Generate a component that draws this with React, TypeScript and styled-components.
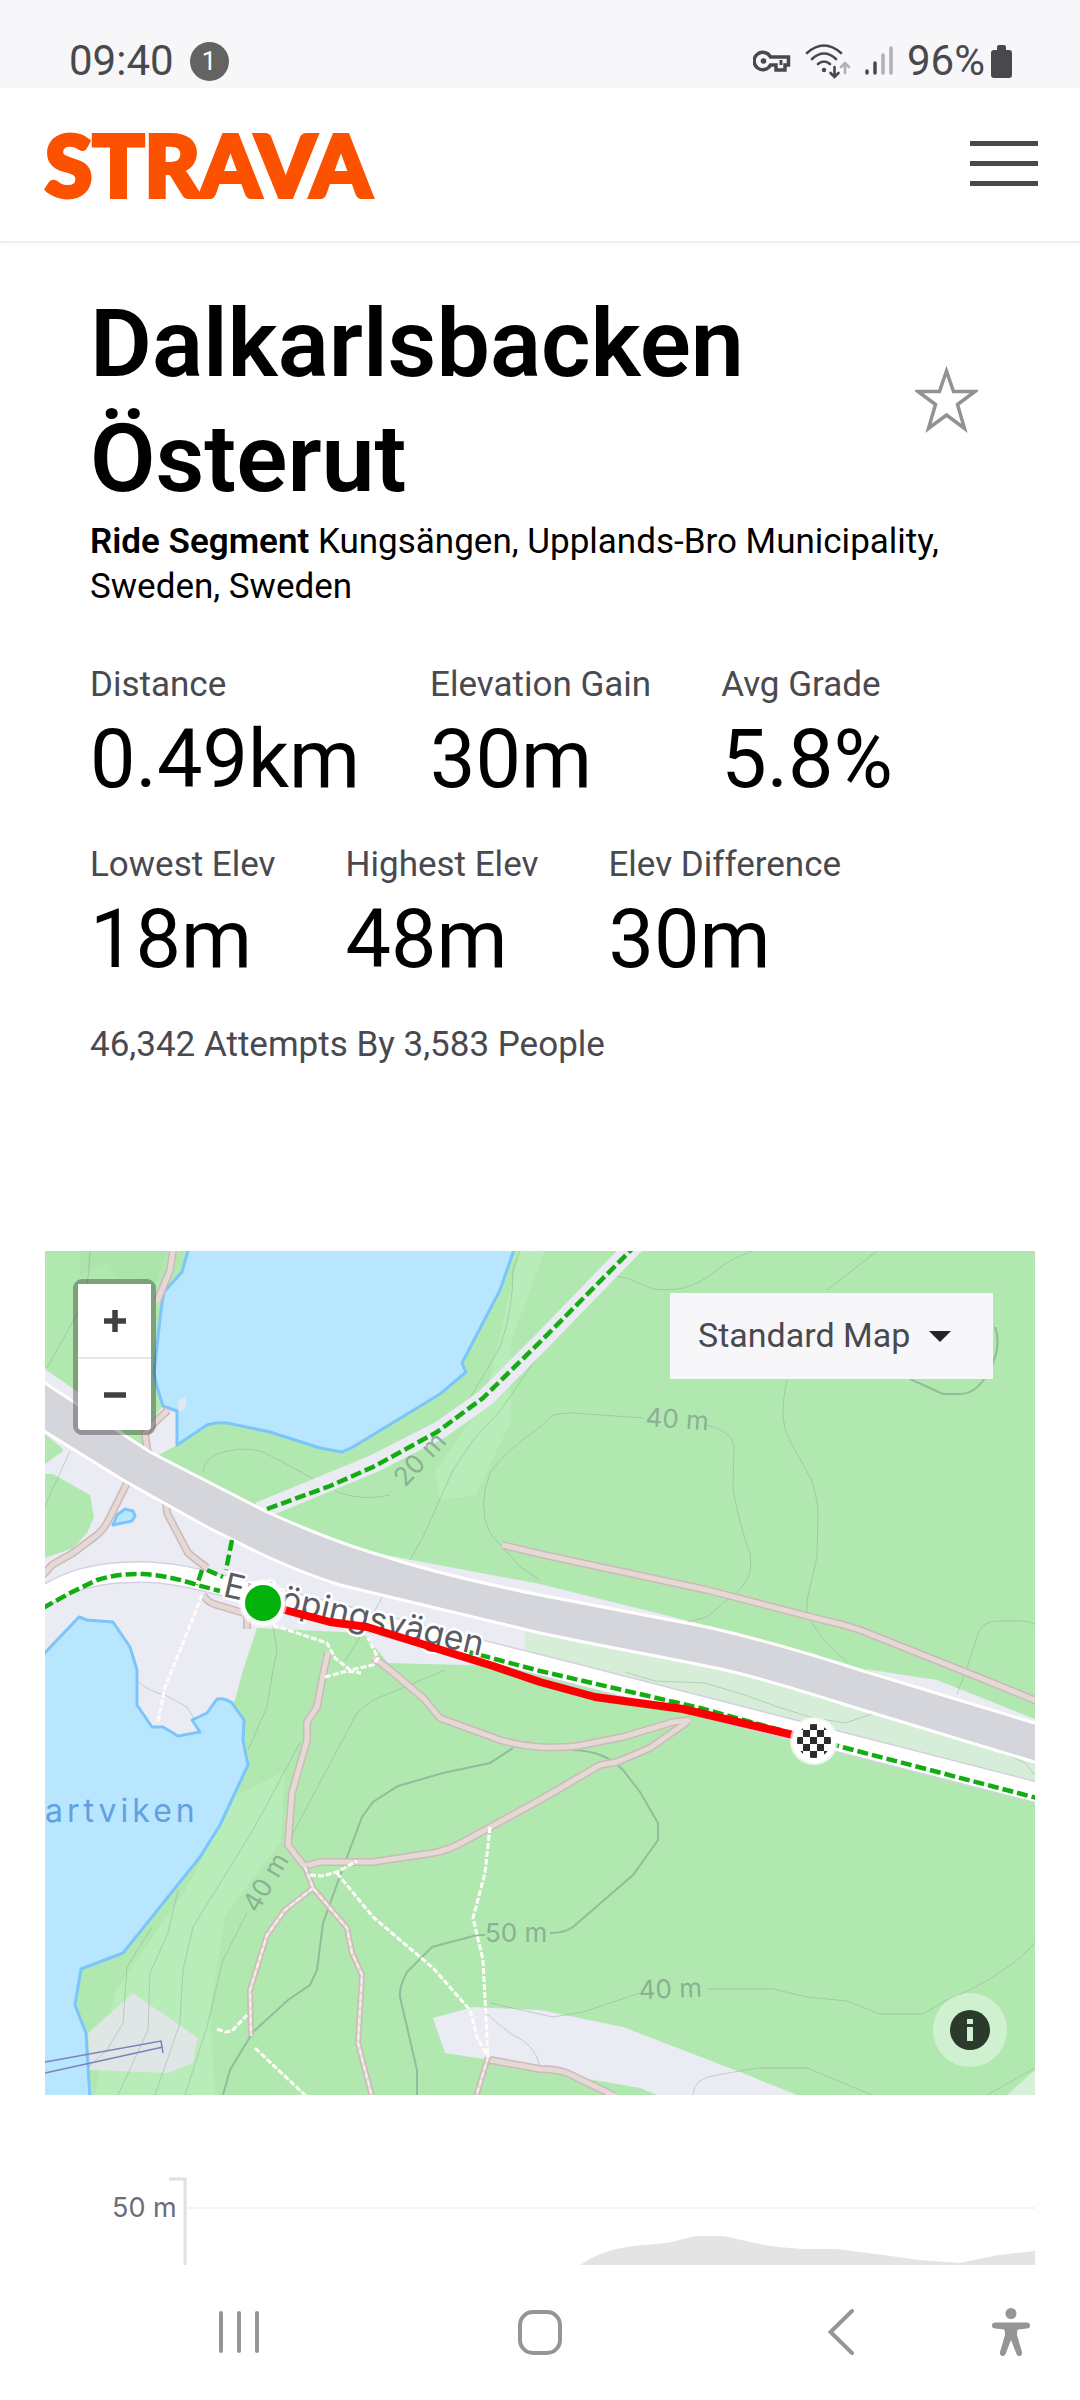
import * as React from "react";
import styled, { createGlobalStyle } from "styled-components";

const GlobalStyle = createGlobalStyle`
  * {
    box-sizing: border-box;
  }

  body {
    margin: 0;
    background: #fff;
    color: #000;
    font-family: Roboto, "Liberation Sans", sans-serif;
  }

  button {
    border: 0;
    padding: 0;
    background: none;
    color: inherit;
    font: inherit;
    cursor: pointer;
  }
`;

const Page = styled.div`
  display: flex;
  flex-direction: column;
  min-height: 100vh;
`;

const StatusBar = styled.div`
  display: flex;
  justify-content: space-between;
  height: 88px;
  padding: 33px 68px 0 69px;
  background: #f7f7fa;
  color: #49494b;
  font-size: 42px;
  line-height: 56px;
`;

const StatusGroup = styled.div<{ $gap: number }>`
  display: flex;
  align-items: center;
  gap: ${({ $gap }) => $gap}px;
  height: 56px;
`;

const Count = styled.span`
  width: 39px;
  height: 39px;
  border-radius: 50%;
  background: #636363;
  color: #fff;
  font-size: 26px;
  line-height: 39px;
  text-align: center;
`;

const Header = styled.header`
  display: flex;
  align-items: center;
  justify-content: space-between;
  height: 155px;
  padding: 0 42px 2px 45px;
  border-bottom: 2px solid #f0f0f1;
  box-shadow: 0 2px 4px rgba(0, 0, 0, 0.02);
`;

const Logo = styled.a`
  color: #fc5200;
  font-family: Lato, "Open Sans", sans-serif;
  font-size: 86px;
  font-weight: 900;
  line-height: 104px;
  text-decoration: none;
  -webkit-text-stroke: 4px #fc5200;
`;

const MenuButton = styled.button`
  display: flex;
  flex-direction: column;
  gap: 15px;
  width: 68px;

  span {
    height: 5px;
    background: #49484d;
  }
`;

const Summary = styled.section`
  padding: 43px 90px 184px;
`;

const TitleRow = styled.div`
  display: flex;
  align-items: center;
  justify-content: space-between;
  padding-right: 12px;
`;

const Title = styled.h1`
  max-width: 700px;
  margin: 0;
  font-size: 95px;
  font-weight: 600;
  line-height: 115px;
`;

const StarButton = styled.button`
  display: flex;
`;

const Location = styled.p`
  margin: 3px 0 53px;
  font-size: 35px;
  line-height: 45px;

  b {
    font-weight: 600;
  }
`;

const Stats = styled.dl`
  display: flex;
  gap: 70px;
  margin: 0 0 29px;
`;

const StatLabel = styled.dt`
  color: #494950;
  font-size: 35px;
  line-height: 45px;
`;

const StatValue = styled.dd`
  margin: 0;
  font-size: 81px;
  line-height: 106px;
`;

const Attempts = styled.p`
  margin: 0;
  color: #494950;
  font-size: 35px;
  line-height: 45px;
`;

const MapFrame = styled.section`
  position: relative;
  margin: 0 45px;

  > svg {
    display: block;
    width: 100%;
    height: auto;
  }
`;

const ZoomControl = styled.div`
  position: absolute;
  top: 28px;
  left: 28px;
  width: 83px;
  border: 5px solid rgba(0, 0, 0, 0.3);
  border-radius: 9px;
  background-clip: padding-box;
`;

const ZoomButton = styled.button`
  display: flex;
  align-items: center;
  justify-content: center;
  width: 100%;
  height: 73px;
  background: #fff;

  & + & {
    border-top: 2px solid #e6e6e6;
    border-radius: 0 0 4px 4px;
  }
`;

const MapPicker = styled.label`
  position: absolute;
  top: 42px;
  right: 42px;
  display: flex;
  align-items: center;

  select {
    width: 323px;
    height: 86px;
    padding: 0 80px 2px 28px;
    border: 0;
    border-radius: 0;
    background: #f7f7fa;
    color: #494950;
    font: 34px Roboto, sans-serif;
    appearance: none;
  }

  svg {
    position: absolute;
    right: 42px;
    pointer-events: none;
  }
`;

const InfoButton = styled.button`
  position: absolute;
  right: 28px;
  bottom: 28px;
  display: flex;
  align-items: center;
  justify-content: center;
  width: 74px;
  height: 74px;
  border-radius: 50%;
  background: rgba(255, 255, 255, 0.4);
`;

const Elevation = styled.section`
  margin: 0 45px;

  svg {
    display: block;
    width: 100%;
    height: auto;
  }
`;

const SystemNav = styled.nav`
  display: grid;
  grid-template-columns: 1fr 1fr 1fr 38px;
  flex: 1;
  min-height: 135px;
  padding: 0 50px 2px 88px;
  color: #959595;

  button {
    display: flex;
    align-items: center;
    justify-content: center;
  }
`;

const Road = styled.g<{ $width: number; $casing: string; $fill: string }>`
  fill: none;
  stroke-linejoin: round;

  .casing {
    stroke: ${({ $casing }) => $casing};
    stroke-width: ${({ $width }) => $width + 3}px;
  }

  .fill {
    stroke: ${({ $fill }) => $fill};
    stroke-width: ${({ $width }) => $width}px;
  }
`;

const Footpath = styled.path`
  fill: none;
  stroke: #fffdfa;
  stroke-width: 3px;
  stroke-dasharray: 6 2;
`;

const CyclePath = styled.path`
  fill: none;
  stroke: #13ad12;
  stroke-width: 4.5px;
  stroke-dasharray: 11 4;
`;

const Water = styled.path`
  fill: #b8e6ff;
  stroke: #7cc5fb;
  stroke-width: 3px;
  stroke-linejoin: round;
`;

const Contour = styled.path<{ $strong?: boolean }>`
  fill: none;
  stroke: #7f9f8c;
  stroke-opacity: ${({ $strong }) => ($strong ? 0.6 : 0.4)};
  stroke-width: ${({ $strong }) => ($strong ? 2 : 1)}px;
`;

const ContourLabel = styled.text`
  fill: #8cb094;
  font: 26px Inter, sans-serif;
`;

const stats = [
  [
    { label: "Distance", value: "0.49km" },
    { label: "Elevation Gain", value: "30m" },
    { label: "Avg Grade", value: "5.8%" },
  ],
  [
    { label: "Lowest Elev", value: "18m" },
    { label: "Highest Elev", value: "48m" },
    { label: "Elev Difference", value: "30m" },
  ],
];

const tracks = [
  "M128 0L125 19L112 51",
  "M123 159L107 174L100 182L103 205",
  "M84 228L62 272Q56 282 48 287L28 302L7 314L-2 324",
  "M121 248L122 262L143 302L162 317",
  "M158 344Q163 352 172 354L202 363V378",
  "M457 294L495 303L662 339L778 369Q797 373 815 379L918 420L992 450",
  "M283 401L279 419L272 456L262 471V489L247 542L243 594L260 616",
  "M328 406L345 419L378 447L395 467L455 489Q475 495 495 496Q515 497 532 495L578 486L628 471L645 469",
  "M260 615L275 611H328L388 602Q404 599 418 591L495 549L555 514L572 511L605 497L642 471",
  "M445 809L495 818Q510 818 522 822L570 845",
];

const narrowTracks = [
  "M260 616L268 637L302 677L307 702L317 724L313 792L327 846",
  "M268 637L240 659L222 684L205 739L206 785",
  "M443 806L431 846",
];

const footpaths = [
  "M157 344L142 382L127 419L120 436L113 471",
  "M228 374L282 392L290 407L305 419L328 414L333 407L323 387",
  "M280 426L302 420L316 422",
  "M265 624L277 625L292 621L312 610",
  "M292 622L328 666L388 717L425 759L432 786L443 806",
  "M445 576L440 622L428 667L438 709L443 806",
  "M172 778L180 781L187 780L202 764",
  "M210 797L262 846",
];

const contours = [
  "M45 0Q43 40 38 52L2 117",
  "M25 200L0 255",
  "M158 222Q158 205 182 200Q210 194 228 206L295 242Q320 250 345 244M418 159L455 96Q468 60 468 19L475 0",
  "M365 309L378 286L408 219L428 189L455 160L495 102L528 46Q545 24 562 24L582 27L608 38Q626 40 638 37Q656 32 668 22Q684 8 707 0",
  "M495 329L475 316L445 282Q432 256 445 222Q458 202 495 176L508 164Q515 162 528 162L598 167M662 174Q686 180 689 194L688 239Q694 272 705 302Q707 320 703 326Q697 339 682 349L662 366L642 371",
  "M832 0L782 39M742 128Q738 145 738 162Q739 178 743 186L765 226Q771 240 773 259L772 306L762 349V360Q770 385 802 411",
  "M990 373Q984 370 975 370H952Q936 370 932 386L923 414L912 443",
  "M400 419L328 449L312 462L255 569L240 597M202 662L178 709L162 776L140 844",
  "M990 692Q960 725 902 749L878 763H835L802 750L762 746L728 738H662M595 742L538 761L508 766L445 752",
  "M648 844Q648 827 672 824L712 817H762L827 844",
  "M228 419L222 456L203 499M255 492L208 579L148 676L138 719L135 772L110 844",
  "M133 639L123 682L105 722L103 779L73 844",
  "M107 676L82 716L78 772L62 799L43 816",
  "M92 430Q105 441 120 444L142 456L150 469M438 760L466 783Q490 793 495 815",
  "M228 374L232 400L228 419M338 345L315 386L300 410",
  "M580 421L610 430L660 432L700 444L730 455L765 466L800 472L830 462M960 502L980 512L990 524",
  "M942 844L990 817",
];

const strongContours = [
  "M950 76Q956 92 948 112Q934 145 912 143H898L865 128",
  "M468 497L445 512L398 522L353 535L328 551L317 566L302 606L278 672L272 719L265 734L243 749L208 781L185 819L178 844",
  "M528 499Q560 500 578 519L595 541L613 572V589L588 624L528 676Q520 682 505 682M440 684H432L387 696L362 721Q354 736 355 746L372 819V846",
];

function Tracks({ paths, width }: { paths: string[]; width: number }) {
  return (
    <Road $width={width} $casing="#cdb9b8" $fill="#e4d9d5">
      {paths.map((d) => <path key={d} className="casing" d={d} />)}
      {paths.map((d) => <path key={d} className="fill" d={d} />)}
    </Road>
  );
}

function TerrainMap() {
  const road = "M-4 348C20 330 50 321 95 321C130 321 160 330 200 340L495 414L994 542";
  const motorway =
    "M-6 128L105 201L222 261C260 278 300 294 335 304C390 322 440 333 495 344L662 376C710 387 760 401 815 419L996 474V513L808 456C760 441 720 428 680 419C620 406 560 396 495 382L295 334C260 323 235 312 212 301L162 276L78 229L-6 177Z";

  return (
    <svg viewBox="0 0 990 844" role="img" aria-label="Segment map">
      <rect width="990" height="844" fill="#b1e8b0" />

      {/* open woodland and clearings */}
      <g fill="#b8ecb8">
        <path d="M190 545L240 520L236 590L180 665L165 760L170 844H50L70 740L140 640Z" />
        <path d="M474 0H500L466 90L466 170L430 245L395 248L390 220L440 150Z" />
      </g>
      <path d="M35 0H122L112 30L70 26L62 12L35 24Z" fill="#ace4ab" />

      <g fill="#ebebf4">
        <path d="M0 213L18 200L0 183V118L60 160L162 276L495 382V416L343 412L318 382L212 377L198 419L190 449L150 500H80L0 420Z" />
        <path d="M118 155L132 160V194L110 206L98 180Z" />
        <path d="M335 303L495 333L660 374L495 350Z" />
        <path d="M820 418L892 429L990 468V476Z" />
        <path d="M388 767L428 756L495 759L578 776L695 821L752 844H612L595 837L538 827L445 809L400 802Z" />
      </g>
      <path d="M0 223H8L45 244L49 266L42 282L28 297L0 307Z" fill="#b1e8b0" />
      <path d="M0 183L18 198L0 213Z" fill="#b1e8b0" />
      <path d="M990 819L962 844H990Z" fill="#d6f0d9" />
      <path d="M480 380L495 382L692 419L990 511V530L800 482L495 404L480 400Z" fill="#d6eed8" />

      <Water d="M144 -4L137 21L119 41L116 59L109 122L112 136L118 155L132 160V194L162 174Q172 171 182 172L225 181L275 197L297 201L308 196L395 143L421 121L417 112L455 39L470 -4Z" />
      <ellipse cx="137" cy="153" rx="4" ry="7" fill="#e3e6f3" transform="rotate(15 137 153)" />
      <Water d="M-4 406L34 366L42 369L68 371L85 396L92 419V454L107 476H118L133 485L155 481L147 469L162 462L172 448Q180 447 187 452L199 469L198 489L203 514L175 574L155 606L78 702L36 718L30 754L41 782L45 848H-4Z" />
      <Water d="M68 274L72 264L80 258L88 260L90 265L87 270Z" />
      <path d="M43 782L88 742L153 787L148 812L123 822L45 819Z" fill="#e0e5e6" />
      <path d="M0 811L116 790L118 802M0 822L118 796" fill="none" stroke="#7b80bb" strokeWidth="1.5" />

      {contours.map((d) => <Contour key={d} d={d} />)}
      {strongContours.map((d) => <Contour key={d} d={d} $strong />)}

      <path d="M214 260L328 213L395 179L440 147L495 92L590 -6" fill="none" stroke="#ebebf4" strokeWidth="18" />
      <Tracks paths={tracks} width={5} />
      <Tracks paths={narrowTracks} width={3} />
      <path d={narrowTracks.join("")} fill="none" stroke="#f5efec" strokeWidth="2" strokeDasharray="5 3" />
      {footpaths.map((d) => <Footpath key={d} d={d} />)}

      <path d={motorway} fill="#d5d6dc" stroke="#fff" strokeWidth="3" />
      <Road $width={19} $casing="#d3d2de" $fill="#fff">
        <path className="casing" d={road} />
        <path className="fill" d={road} />
      </Road>

      <CyclePath d="M222 258L285 235L328 216L392 181L438 147L495 91L588 -3" />
      <CyclePath d="M-2 357L25 342L52 329Q75 322 98 323Q126 325 152 334L175 340" />
      <CyclePath d="M187 289L181 319M157 319L152 334M162 319L178 326" />
      <CyclePath d="M420 400L495 420L655 457L797 496L992 547" />

      <ContourLabel transform="translate(360 237) rotate(-47)">20 m</ContourLabel>
      <ContourLabel transform="translate(600 175) rotate(4)">40 m</ContourLabel>
      <ContourLabel transform="translate(212 663) rotate(-59)">40 m</ContourLabel>
      <ContourLabel transform="translate(440 691)">50 m</ContourLabel>
      <ContourLabel transform="translate(594 748) rotate(-2)">40 m</ContourLabel>
      <text x="0" y="571" fill="#62a0de" fontFamily="Inter, sans-serif" fontSize="32" letterSpacing="4">
        artviken
      </text>
      <text
        transform="translate(177 345) rotate(13)"
        fill="#5a5c63"
        stroke="#fff"
        strokeWidth="5"
        strokeLinejoin="round"
        paintOrder="stroke"
        fontFamily="Inter, sans-serif"
        fontSize="34"
      >
        Enköpingsvägen
      </text>

      <path d="M218 353L240 359L285 371L322 376L448 415L495 431L550 446L638 458L769 489" fill="none" stroke="#fb0000" strokeWidth="8" strokeLinejoin="round" />
      <circle cx="218" cy="352" r="24" fill="#fff" opacity=".6" />
      <circle cx="218" cy="352" r="22" fill="#fff" />
      <circle cx="218" cy="352" r="18" fill="#05b20c" />

      <defs>
        <pattern id="checks" x="765" y="486" width="14" height="14" patternUnits="userSpaceOnUse">
          <rect width="14" height="14" fill="#fff" />
          <path d="M0 0H7V7H0ZM7 7H14V14H7Z" fill="#2b2b2b" />
        </pattern>
      </defs>
      <circle cx="769" cy="490" r="24" fill="#fff" opacity=".7" />
      <circle cx="769" cy="490" r="22" fill="#fff" />
      <circle cx="769" cy="490" r="17" fill="url(#checks)" />
    </svg>
  );
}

function ElevationChart() {
  return (
    <svg viewBox="0 0 990 170" role="img" aria-label="Elevation profile">
      <path d="M142 113H990" stroke="#f4f4f5" strokeWidth="2" />
      <path d="M535 170Q552 158 576 153Q586 151 598 150Q615 149 626 147C640 144 647 141 654 141H676C690 142 700 147 715 149Q735 153 757 154H791L839 160L874 165L915 168L953 160L990 156V170Z" fill="#e4e4e4" />
      <path d="M124 84H140V170" fill="none" stroke="#e0e0e3" strokeWidth="3" />
      <text x="67" y="122" fill="#6d6d78" fontFamily="Inter, sans-serif" fontSize="27">50 m</text>
    </svg>
  );
}

function KeyIcon() {
  return (
    <svg width="38" height="22" viewBox="0 0 38 22" fill="none" stroke="currentColor" strokeWidth="3.5">
      <path d="M17.500 7A8.700 8.700 0 1 0 17.500 15H23V20H32V15H35.500V7Z" />
      <circle cx="10.500" cy="11" r="2.800" fill="currentColor" stroke="none" />
      <path d="M28 10V15" strokeWidth="3" />
    </svg>
  );
}

function WifiIcon() {
  return (
    <svg width="46" height="36" viewBox="0 0 46 36" fill="none" stroke="currentColor" strokeWidth="2.600" strokeLinecap="round">
      <path d="M2 10Q19 -5 36 10M7 16Q19 5 31 16M13 21Q19 16 25 21" />
      <circle cx="19" cy="27" r="2.200" fill="currentColor" stroke="none" />
      <path d="M29.500 24V33M25.500 30L29.500 34L33.500 30" />
      <path d="M40 30V21M36 24L40 20L44 24" opacity=".4" />
    </svg>
  );
}

function SignalIcon() {
  return (
    <svg width="28" height="32" viewBox="0 0 28 32" fill="none" stroke="currentColor" strokeWidth="3.500" strokeLinecap="round">
      <path d="M2 26V28M10 18V28" />
      <path d="M18 10V28M26 3V28" opacity=".4" />
    </svg>
  );
}

function BatteryIcon() {
  return (
    <svg width="21" height="33" viewBox="0 0 21 33" fill="currentColor">
      <path d="M6 5V2Q6 0 8 0H13Q15 0 15 2V5H18Q21 5 21 8V30Q21 33 18 33H3Q0 33 0 30V8Q0 5 3 5Z" />
    </svg>
  );
}

function App() {
  return (
    <Page>
      <GlobalStyle />
      <StatusBar>
        <StatusGroup $gap={16}>
          <span>09:40</span>
          <Count>1</Count>
        </StatusGroup>
        <StatusGroup $gap={14}>
          <KeyIcon />
          <WifiIcon />
          <SignalIcon />
          <StatusGroup $gap={6}>
            <span>96%</span>
            <BatteryIcon />
          </StatusGroup>
        </StatusGroup>
      </StatusBar>

      <Header>
        <Logo href="/">STRAVA</Logo>
        <MenuButton type="button" aria-label="Menu">
          <span />
          <span />
          <span />
        </MenuButton>
      </Header>

      <main>
        <Summary>
          <TitleRow>
            <Title>Dalkarlsbacken Österut</Title>
            <StarButton type="button" aria-label="Star segment">
              <svg width="63" height="70" viewBox="0 0 63 70" fill="none" stroke="#929292" strokeWidth="3.500">
                <path d="M31.500 5L38.500 25.500H60L42.500 38.500L49.500 62.500L31.500 49L13.500 62.500L20.500 38.500L3 25.500H24.500Z" />
              </svg>
            </StarButton>
          </TitleRow>
          <Location>
            <b>Ride Segment</b> Kungsängen, Upplands-Bro Municipality, Sweden, Sweden
          </Location>
          {stats.map((row) => (
            <Stats key={row[0].label}>
              {row.map((stat) => (
                <div key={stat.label}>
                  <StatLabel>{stat.label}</StatLabel>
                  <StatValue>{stat.value}</StatValue>
                </div>
              ))}
            </Stats>
          ))}
          <Attempts>46,342 Attempts By 3,583 People</Attempts>
        </Summary>

        <MapFrame>
          <TerrainMap />
          <ZoomControl>
            <ZoomButton type="button" aria-label="Zoom in">
              <svg width="24" height="24" viewBox="0 0 24 24" stroke="#404040" strokeWidth="5.500">
                <path d="M1 12H23M12 1V23" />
              </svg>
            </ZoomButton>
            <ZoomButton type="button" aria-label="Zoom out">
              <svg width="24" height="24" viewBox="0 0 24 24" stroke="#404040" strokeWidth="5.500">
                <path d="M1 12H23" />
              </svg>
            </ZoomButton>
          </ZoomControl>
          <MapPicker>
            <select aria-label="Map style">
              <option>Standard Map</option>
            </select>
            <svg width="22" height="11" viewBox="0 0 22 11">
              <path d="M0 0H22L11 11Z" fill="#242428" />
            </svg>
          </MapPicker>
          <InfoButton type="button" aria-label="Map information">
            <svg width="40" height="40" viewBox="0 0 40 40">
              <circle cx="20" cy="20" r="20" fill="#2c3a2c" />
              <path d="M17 9H23V14H17ZM17 17H23V31H17Z" fill="#d0f1d0" />
            </svg>
          </InfoButton>
        </MapFrame>

        <Elevation>
          <ElevationChart />
        </Elevation>
      </main>

      <SystemNav aria-label="System">
        <button type="button" aria-label="Recent apps">
          <svg width="40" height="44" viewBox="0 0 40 44" stroke="currentColor" strokeWidth="4" strokeLinecap="round">
            <path d="M2 3V41M20 3V41M38 3V41" />
          </svg>
        </button>
        <button type="button" aria-label="Home">
          <svg width="44" height="46" viewBox="0 0 44 46" fill="none" stroke="currentColor" strokeWidth="4">
            <rect x="2" y="3" width="40" height="41" rx="13" />
          </svg>
        </button>
        <button type="button" aria-label="Back">
          <svg width="26" height="48" viewBox="0 0 26 48" fill="none" stroke="currentColor" strokeWidth="4" strokeLinecap="round">
            <path d="M24 3L2.500 24L24 45" />
          </svg>
        </button>
        <button type="button" aria-label="Accessibility">
          <svg width="38" height="48" viewBox="0 0 38 48" fill="currentColor">
            <circle cx="19" cy="5.500" r="5.500" />
            <path d="M3 14.500H35Q38 14.500 38 17.500T35 20.500L26 21.500Q25 22 25 27L30 44Q30.500 47 28 48Q25.500 48.500 24.500 46L19 32L13.500 46Q12.500 48.500 10 48Q7.500 47 8 44L13 27Q13 22 12 21.500L3 20.500Q0 20.500 0 17.500T3 14.500Z" />
          </svg>
        </button>
      </SystemNav>
    </Page>
  );
}

export default App;
